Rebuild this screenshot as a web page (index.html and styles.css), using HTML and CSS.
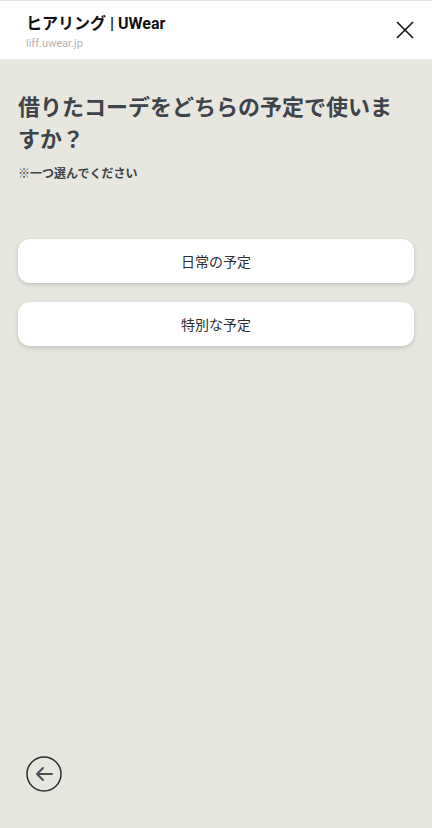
FILE: index.html
```html
<!DOCTYPE html>
<html lang="ja">
<head>
<meta charset="utf-8">
<link rel="stylesheet" href="styles.css">
</head>
<body>
<div class="app">
  <header class="header">
    <div class="header-text">
      <div class="header-title">ヒアリング | UWear</div>
      <div class="header-url">liff.uwear.jp</div>
    </div>
    <button class="close" aria-label="閉じる">
      <svg width="18" height="18" viewBox="0 0 18 18"><path d="M1 1L17 17M17 1L1 17" stroke="#111" stroke-width="1.6" fill="none"/></svg>
    </button>
  </header>
  <main class="main">
    <h1 class="question">借りたコーデをどちらの予定で使いますか？</h1>
    <p class="note">※一つ選んでください</p>
    <div class="options">
      <button class="option">日常の予定</button>
      <button class="option">特別な予定</button>
    </div>
    <div class="spacer"></div>
    <button class="back" aria-label="戻る">
      <svg width="36" height="36" viewBox="0 0 36 36"><circle cx="18" cy="18" r="17" stroke="#2b3035" stroke-width="1.5" fill="none"/><path d="M11 18H26M17 12L11 18L17 24" stroke="#4a5056" stroke-width="2" fill="none" stroke-linecap="round" stroke-linejoin="round"/></svg>
    </button>
  </main>
</div>
</body>
</html>
```

FILE: styles.css
```css
* { box-sizing: border-box; }
html, body { margin: 0; padding: 0; }
body {
  width: 432px;
  height: 828px;
  font-family: "Noto Sans CJK JP", "Noto Sans", sans-serif;
  background: #e7e6df;
  overflow: hidden;
}
.app {
  height: 828px;
  display: flex;
  flex-direction: column;
}
.header {
  height: 59px;
  flex: none;
  background: #fff;
  border-top: 1px solid #e4e4e4;
  display: flex;
  align-items: center;
  justify-content: space-between;
  padding: 0 18px 0 26px;
}
.header-text {
  display: flex;
  flex-direction: column;
  padding-top: 4px;
}
.header-title {
  font-family: Roboto, "Noto Sans CJK JP", sans-serif;
  font-weight: 700;
  font-size: 16px;
  line-height: 20px;
  color: #111;
}
.header-url {
  font-family: Roboto, sans-serif;
  font-size: 11px;
  line-height: 14px;
  color: #b4b4b4;
  margin-top: 3px;
}
.close {
  border: 0;
  background: none;
  padding: 0;
  width: 18px;
  height: 18px;
  display: flex;
}
.main {
  flex: 1;
  display: flex;
  flex-direction: column;
  padding: 30px 18px 36px 18px;
}
.question {
  margin: 0;
  font-size: 22px;
  line-height: 32px;
  font-weight: 700;
  color: #3e4449;
  padding-right: 8px;
}
.note {
  margin: 11px 0 0 0;
  font-size: 12px;
  line-height: 18px;
  font-weight: 700;
  color: #3e4449;
}
.options {
  display: flex;
  flex-direction: column;
  gap: 19px;
  margin-top: 57px;
}
.option {
  height: 44px;
  border: 0;
  border-radius: 12px;
  background: #fff;
  box-shadow: 0 2px 4px rgba(0,0,0,0.15);
  font-family: "Noto Sans CJK JP", sans-serif;
  font-size: 14px;
  color: #2b3035;
}
.spacer { flex: 1; }
.back {
  border: 0;
  background: none;
  padding: 0;
  margin-left: 8px;
  width: 36px;
  height: 36px;
  display: flex;
}
```
